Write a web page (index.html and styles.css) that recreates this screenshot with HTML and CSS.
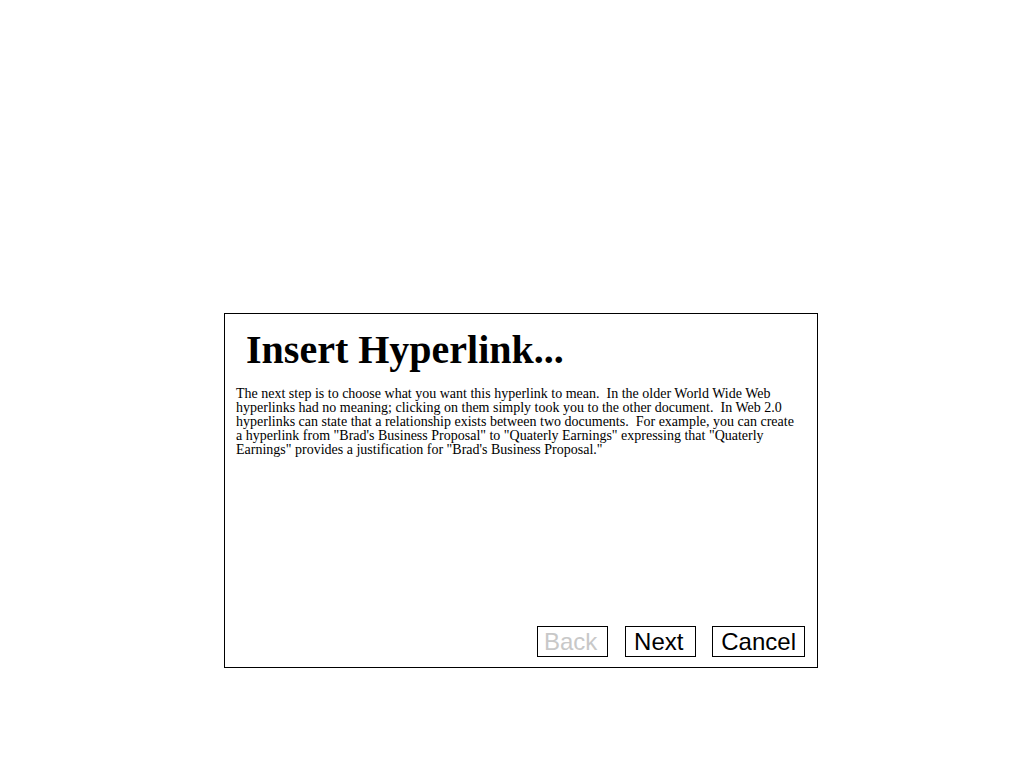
FILE: index.html
```html
<!DOCTYPE html>
<html lang="en">
<head>
<meta charset="utf-8">
<title>Insert Hyperlink</title>
<link rel="stylesheet" href="styles.css">
</head>
<body>
<div class="dialog">
  <h1 class="title">Insert Hyperlink...</h1>
  <p class="desc">The next step is to choose what you want this hyperlink to mean.  In the older World Wide Web hyperlinks had no meaning; clicking on them simply took you to the other document.  In Web 2.0 hyperlinks can state that a relationship exists between two documents.  For example, you can create a hyperlink from "Brad's Business Proposal" to "Quaterly Earnings" expressing that "Quaterly Earnings" provides a justification for "Brad's Business Proposal."</p>
  <div class="actions">
    <button class="btn disabled" type="button">Back</button>
    <button class="btn" type="button">Next</button>
    <button class="btn cancel" type="button">Cancel</button>
  </div>
</div>
</body>
</html>
```
FILE: styles.css
```css
html, body {
  margin: 0;
  padding: 0;
  background: #fff;
}

.dialog {
  box-sizing: border-box;
  width: 594px;
  height: 355px;
  margin: 313px 0 0 224px;
  border: 1px solid #000;
  padding: 11px 11px 10px 11px;
  display: flex;
  flex-direction: column;
  font-family: "Liberation Serif", "Times New Roman", serif;
  color: #000;
}

.title {
  margin: 2px 0 14px 10px;
  font-size: 40px;
  font-weight: bold;
  line-height: 46px;
}

.desc {
  margin: 0;
  width: 565px;
  font-size: 14px;
  line-height: 14px;
  white-space: pre-wrap;
}

.actions {
  margin-top: auto;
  display: flex;
  justify-content: flex-end;
  gap: 16px;
  padding-right: 1px;
}

.btn {
  box-sizing: border-box;
  min-width: 71px;
  height: 31px;
  margin: 0;
  padding: 0 10px 0 6px;
  border: 1px solid #000;
  background: #fff;
  color: #000;
  font-family: "Liberation Sans", Arial, sans-serif;
  font-size: 24px;
  line-height: 28px;
  text-align: center;
}

.btn.cancel {
  padding: 0 8px;
}

.btn.disabled {
  color: #c8c8c8;
  margin-right: 1px;
}
```
